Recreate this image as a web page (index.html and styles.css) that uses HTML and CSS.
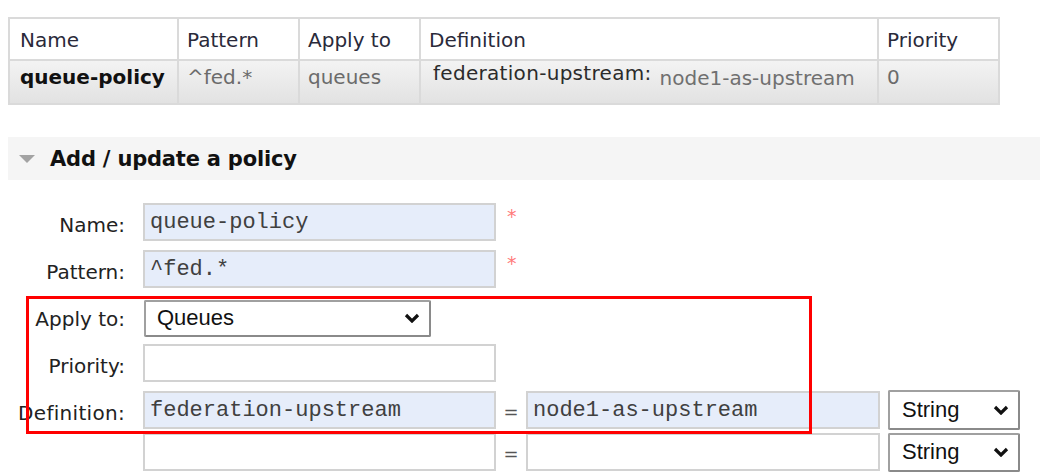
FILE: index.html
```html
<!DOCTYPE html>
<html lang="en">
<head>
<meta charset="utf-8">
<title>Policies</title>
<link rel="stylesheet" href="styles.css">
</head>
<body>
<div class="page">
  <table class="list">
    <colgroup>
      <col class="c-name"><col class="c-pat"><col class="c-apply"><col class="c-def"><col class="c-prio">
    </colgroup>
    <thead>
      <tr><th>Name</th><th>Pattern</th><th>Apply to</th><th>Definition</th><th>Priority</th></tr>
    </thead>
    <tbody>
      <tr>
        <td class="strong">queue-policy</td>
        <td class="muted">^fed.*</td>
        <td class="muted">queues</td>
        <td class="def-cell">
          <div class="facts"><span class="fact-key">federation-upstream:</span><span class="fact-val">node1-as-upstream</span></div>
        </td>
        <td class="muted">0</td>
      </tr>
    </tbody>
  </table>

  <section class="section">
    <h2 class="section-title">
      <svg class="tri" width="16" height="9" viewBox="0 0 16 9"><polygon points="0,0 16,0 8,8" fill="#a3a3a3"/></svg>
      Add / update a policy
    </h2>
    <form class="form">
      <div class="row">
        <label class="lbl">Name:</label>
        <input class="inp filled" type="text" value="queue-policy">
        <span class="req">*</span>
      </div>
      <div class="row">
        <label class="lbl">Pattern:</label>
        <input class="inp filled" type="text" value="^fed.*">
        <span class="req">*</span>
      </div>
      <div class="row">
        <label class="lbl">Apply to:</label>
        <div class="sel sel-apply"><span>Queues</span><svg class="chev" width="16" height="10" viewBox="0 0 16 10"><polyline points="2,2 8,8 14,2" fill="none" stroke="#111" stroke-width="3.2"/></svg></div>
      </div>
      <div class="row">
        <label class="lbl">Priority:</label>
        <input class="inp" type="text" value="">
      </div>
      <div class="row row-def">
        <label class="lbl lbl-def">Definition:</label>
        <input class="inp filled" type="text" value="federation-upstream">
        <span class="eq">=</span>
        <input class="inp inp-val filled" type="text" value="node1-as-upstream">
        <div class="sel sel-type"><span>String</span><svg class="chev" width="16" height="10" viewBox="0 0 16 10"><polyline points="2,2 8,8 14,2" fill="none" stroke="#111" stroke-width="3.2"/></svg></div>
      </div>
      <div class="row row-def2">
        <span class="lbl"></span>
        <input class="inp" type="text" value="">
        <span class="eq">=</span>
        <input class="inp inp-val" type="text" value="">
        <div class="sel sel-type"><span>String</span><svg class="chev" width="16" height="10" viewBox="0 0 16 10"><polyline points="2,2 8,8 14,2" fill="none" stroke="#111" stroke-width="3.2"/></svg></div>
      </div>
      <div class="annot"></div>
    </form>
  </section>
</div>
</body>
</html>
```

FILE: styles.css
```css
* { box-sizing: border-box; }
html, body { margin: 0; padding: 0; background: #fff; }
body {
  font-family: "DejaVu Sans", Verdana, sans-serif;
  font-size: 20px;
  color: #222;
  overflow: hidden;
}
.page { padding: 17px 0 0 8px; }

/* table */
.list {
  border-collapse: collapse;
  table-layout: fixed;
  width: 990px;
}
.c-name { width: 169px; }
.c-pat { width: 121px; }
.c-apply { width: 121px; }
.c-def { width: 458px; }
.c-prio { width: 121px; }
.list th, .list td {
  border: 2px solid #dadada;
  text-align: left;
  padding: 0 8px;
  white-space: nowrap;
  line-height: 24px;
}
.list th {
  font-weight: normal;
  height: 42px;
  vertical-align: middle;
  color: #2a2a3a;
  background: #fff;
  padding-top: 2px;
}
.list th:first-child, .list td:first-child { padding-left: 10px; }
.list td {
  height: 44px;
  vertical-align: top;
  padding-top: 4px;
  background: linear-gradient(#f3f3f3, #e2e2e2);
}
.list td.strong { font-weight: bold; color: #111; }
.list td.muted { color: #6b6b6b; }
.list td.def-cell { padding-top: 0; padding-left: 12px; }
.facts { display: flex; align-items: flex-start; gap: 8px; }
.fact-key { color: #2b2b2b; letter-spacing: 0.3px; }
.fact-val { color: #707070; padding-top: 5px; }

/* section */
.section { margin-top: 32px; }
.section-title {
  margin: 0;
  height: 43px;
  background: #f5f5f5;
  display: flex;
  align-items: center;
  padding-left: 11px;
  font-size: 21px;
  font-weight: bold;
  color: #111;
  letter-spacing: -0.2px;
}
.tri { margin-right: 15px; margin-top: 2px; }

/* form */
.form { position: relative; padding-top: 23px; }
.row {
  display: flex;
  align-items: center;
  height: 38px;
  margin-bottom: 9px;
}
.row-def { margin-bottom: 4px; }
.lbl {
  width: 117px;
  margin-right: 18px;
  text-align: right;
  color: #222;
  padding-top: 6px;
  white-space: nowrap;
}
.lbl-def { letter-spacing: 0.3px; }
.inp {
  width: 353px;
  height: 38px;
  border: 2px solid #d2d2d2;
  background: #fff;
  font-family: "Liberation Mono", "Courier New", monospace;
  font-size: 22px;
  color: #404040;
  padding: 0 5px;
  margin: 0;
  outline: none;
}
.inp.filled { background: #e6edfa; }
.inp-val { width: 354px; }
.req {
  align-self: flex-start;
  margin-left: 11px;
  margin-top: 2px;
  color: #ff7b7b;
  font-size: 19px;
}
.eq {
  width: 30px;
  text-align: center;
  color: #555;
  font-size: 18px;
  padding-top: 2px;
}
.sel {
  display: flex;
  align-items: center;
  justify-content: space-between;
  height: 37px;
  border: 2px solid #8a8a8a;
  border-top-color: #a0a0a0;
  border-left-color: #a0a0a0;
  border-radius: 2px;
  background: #fff;
  font-family: "Liberation Sans", Arial, sans-serif;
  font-size: 22px;
  color: #111;
  padding: 0 9px 0 11px;
}
.sel-apply { width: 287px; margin-left: 1px; margin-top: 4px; }
.sel-type { width: 132px; height: 40px; margin-left: 8px; padding-left: 12px; }
.row-def2 .sel-type { height: 39px; }
.chev { display: block; }

.annot {
  position: absolute;
  left: 18px;
  top: 116px;
  width: 786px;
  height: 138px;
  border: 3px solid #ff0000;
  pointer-events: none;
}
```
